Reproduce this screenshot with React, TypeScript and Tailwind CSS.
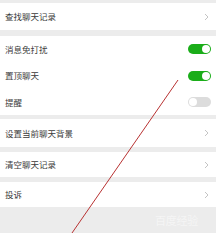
import React from "react";

function Chevron() {
  return (
    <svg width="5" height="8" viewBox="0 0 5 8" className="shrink-0 mr-[2px]">
      <path d="M1 1l3 3-3 3" fill="none" stroke="#c4c4c4" strokeWidth="1" />
    </svg>
  );
}

function Toggle({ on }: { on: boolean }) {
  return (
    <div
      className={`w-[23px] h-[10px] rounded-full flex items-center px-[1px] ${
        on ? "bg-[#1aad19] justify-end" : "bg-[#dcdcdc] justify-start"
      }`}
    >
      <div className="w-[8px] h-[8px] rounded-full bg-white" />
    </div>
  );
}

function Row({
  label,
  h,
  right,
}: {
  label: string;
  h: string;
  right: React.ReactNode;
}) {
  return (
    <div className={`flex items-center justify-between bg-white pl-[5px] pr-[5px] ${h}`}>
      <span className="text-[8.5px] text-[#3a3a3a]">{label}</span>
      {right}
    </div>
  );
}

export default function App() {
  return (
    <div
      className="relative w-[216px] h-[233px] overflow-hidden bg-[#ececec] pt-[3px]"
      style={{ fontFamily: '"Noto Sans CJK SC", "Noto Sans", sans-serif' }}
    >
      <Row label="查找聊天记录" h="h-[27px]" right={<Chevron />} />

      <div className="mt-[6px] bg-white">
        <Row label="消息免打扰" h="h-[26px]" right={<Toggle on />} />
        <Row label="置顶聊天" h="h-[27px]" right={<Toggle on />} />
        <Row label="提醒" h="h-[26px]" right={<Toggle on={false} />} />
      </div>

      <div className="mt-[4px]">
        <Row label="设置当前聊天背景" h="h-[28px]" right={<Chevron />} />
      </div>
      <div className="mt-[5px]">
        <Row label="清空聊天记录" h="h-[25px]" right={<Chevron />} />
      </div>
      <div className="mt-[5px]">
        <Row label="投诉" h="h-[25px]" right={<Chevron />} />
      </div>

      <div className="flex justify-end pr-[18px] pt-[5px]">
        <span className="text-[11px] text-white/50 tracking-tight">百度经验</span>
      </div>

      {/* annotation arrow line */}
      <svg
        className="absolute inset-0 pointer-events-none"
        width="216"
        height="233"
        viewBox="0 0 216 233"
      >
        <line x1="178" y1="80" x2="72" y2="233" stroke="#b83232" strokeWidth="1" />
      </svg>
    </div>
  );
}
